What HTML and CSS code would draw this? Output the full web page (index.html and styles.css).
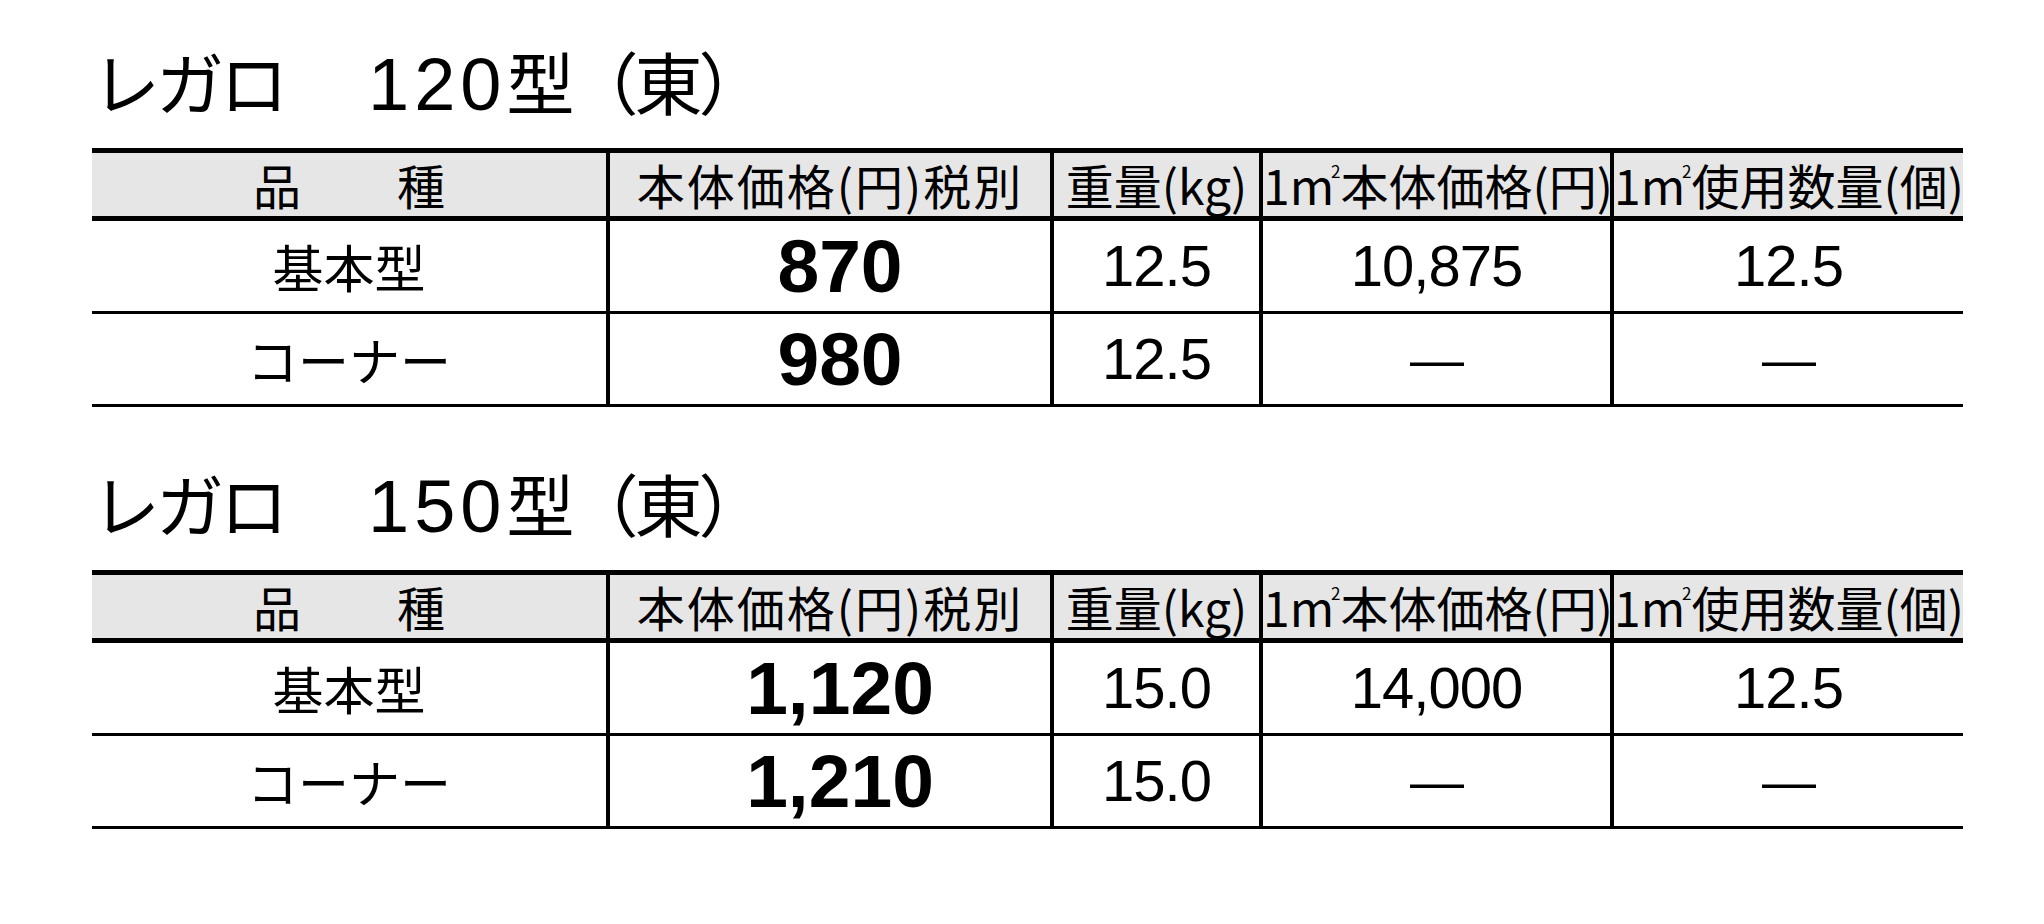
FILE: index.html
```html
<!DOCTYPE html>
<html lang="ja">
<head>
<meta charset="utf-8">
<title>レガロ 価格表</title>
<link rel="stylesheet" href="styles.css">
</head>
<body>
<main class="page">
  <section class="block">
    <h2 class="title">レガロ　<span class="digits">120</span>型（東）</h2>
    <table class="price">
      <colgroup>
        <col class="c1"><col class="c2"><col class="c3"><col class="c4"><col class="c5">
      </colgroup>
      <thead>
        <tr>
          <th>品　　種</th>
          <th class="wide">本体価格(円)税別</th>
          <th>重量(kg)</th>
          <th>1m<sup>2</sup>本体価格(円)</th>
          <th>1m<sup>2</sup>使用数量(個)</th>
        </tr>
      </thead>
      <tbody>
        <tr>
          <td class="name">基本型</td>
          <td class="bold">870</td>
          <td class="num">12.5</td>
          <td class="num">10,875</td>
          <td class="num">12.5</td>
        </tr>
        <tr>
          <td class="name">コーナー</td>
          <td class="bold">980</td>
          <td class="num">12.5</td>
          <td class="num dash">—</td>
          <td class="num dash">—</td>
        </tr>
      </tbody>
    </table>
  </section>

  <section class="block">
    <h2 class="title">レガロ　<span class="digits">150</span>型（東）</h2>
    <table class="price">
      <colgroup>
        <col class="c1"><col class="c2"><col class="c3"><col class="c4"><col class="c5">
      </colgroup>
      <thead>
        <tr>
          <th>品　　種</th>
          <th class="wide">本体価格(円)税別</th>
          <th>重量(kg)</th>
          <th>1m<sup>2</sup>本体価格(円)</th>
          <th>1m<sup>2</sup>使用数量(個)</th>
        </tr>
      </thead>
      <tbody>
        <tr>
          <td class="name">基本型</td>
          <td class="bold">1,120</td>
          <td class="num">15.0</td>
          <td class="num">14,000</td>
          <td class="num">12.5</td>
        </tr>
        <tr>
          <td class="name">コーナー</td>
          <td class="bold">1,210</td>
          <td class="num">15.0</td>
          <td class="num dash">—</td>
          <td class="num dash">—</td>
        </tr>
      </tbody>
    </table>
  </section>
</main>
</body>
</html>
```

FILE: styles.css
```css
html, body {
  margin: 0;
  padding: 0;
  background: #ffffff;
  color: #000000;
}

.page {
  padding: 50px 0 0 92px;
  font-family: "Noto Sans CJK JP", "Noto Sans", sans-serif;
}

.block + .block {
  margin-top: 65px;
}

.title {
  margin: 0 0 36px 0;
  font-size: 68px;
  font-weight: 400;
  line-height: 62px;
  height: 62px;
  letter-spacing: -4px;
  white-space: nowrap;
}

.title .digits {
  font-family: "Liberation Sans", Arial, sans-serif;
  font-size: 74px;
  letter-spacing: 5px;
  margin-left: 20px;
}

.price {
  width: 1871px;
  table-layout: fixed;
  border-collapse: separate;
  border-spacing: 0;
}

.price col.c1 { width: 514px; }
.price col.c2 { width: 444px; }
.price col.c3 { width: 209px; }
.price col.c4 { width: 351px; }
.price col.c5 { width: 353px; }

.price th,
.price td {
  padding: 0;
  text-align: center;
  white-space: nowrap;
  overflow: visible;
}

.price th + th,
.price td + td {
  border-left: 4px solid #000;
}

.price th {
  background: #e6e6e6;
  border-top: 5px solid #000;
  border-bottom: 5px solid #000;
  height: 63px;
  line-height: 63px;
  font-size: 48px;
  font-weight: 400;
  letter-spacing: 0;
}

.price th.wide {
  letter-spacing: 2px;
}

.price th sup {
  font-size: 17px;
  line-height: 0;
  vertical-align: 27px;
  margin-left: -3px;
  letter-spacing: 0;
}

.price td {
  border-bottom: 3px solid #000;
  height: 90px;
  line-height: 90px;
}

.price td.name {
  font-size: 51px;
}

.price td.bold {
  font-family: "Liberation Sans", Arial, sans-serif;
  font-weight: 700;
  font-size: 75px;
  padding-left: 20px;
}

.price td.num {
  font-family: "Liberation Sans", Arial, sans-serif;
  font-size: 58px;
  letter-spacing: -1px;
}

.price td.dash {
  font-size: 54px;
}
```
